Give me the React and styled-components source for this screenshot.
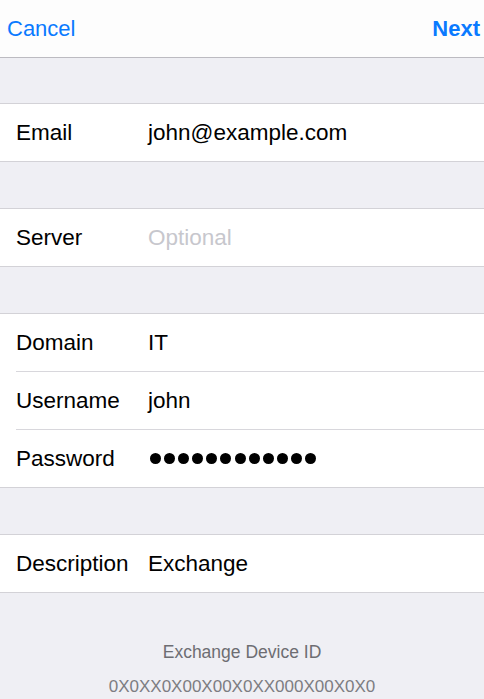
import styled, { createGlobalStyle } from "styled-components";

const GlobalStyle = createGlobalStyle`
  html, body {
    margin: 0;
    padding: 0;
    background: #efeff4;
  }
  body {
    font-family: "Liberation Sans", Arial, sans-serif;
    -webkit-font-smoothing: antialiased;
  }
`;

const groups = [
  [{ label: "Email", value: "john@example.com" }],
  [{ label: "Server", value: "Optional", placeholder: true }],
  [
    { label: "Domain", value: "IT" },
    { label: "Username", value: "john" },
    { label: "Password", secret: 12 },
  ],
  [{ label: "Description", value: "Exchange" }],
];

const App = () => {
  return (
    <Page>
      <GlobalStyle />
      <NavBar>
        <NavButton>Cancel</NavButton>
        <NavButton $bold>Next</NavButton>
      </NavBar>

      <Form>
        {groups.map((rows, i) => (
          <Group key={i}>
            {rows.map((row) => (
              <Row key={row.label}>
                <Label>{row.label}</Label>
                {row.secret ? (
                  <Dots aria-label="password">
                    {Array.from({ length: row.secret }).map((_, j) => (
                      <Dot key={j} />
                    ))}
                  </Dots>
                ) : (
                  <Value $placeholder={row.placeholder}>{row.value}</Value>
                )}
              </Row>
            ))}
          </Group>
        ))}
      </Form>

      <Footer>
        <FooterTitle>Exchange Device ID</FooterTitle>
        <DeviceId>0X0XX0X00X00X0XX000X00X0X0</DeviceId>
      </Footer>
    </Page>
  );
};

export default App;

const Page = styled.div`
  min-height: 100vh;
  background: #efeff4;
`;

const NavBar = styled.div`
  height: 57px;
  background: #fdfdfd;
  border-bottom: 1px solid #bcbbc1;
  display: flex;
  align-items: center;
  justify-content: space-between;
  padding: 0 4px 0 7px;
`;

const NavButton = styled.span`
  font-size: 22px;
  color: #0a7aff;
  font-weight: ${(p) => (p.$bold ? 700 : 400)};
`;

const Form = styled.div`
  display: flex;
  flex-direction: column;
  gap: 46px;
  padding-top: 45px;
`;

const Group = styled.div`
  background: #fff;
  border-top: 1px solid #d3d2d7;
  border-bottom: 1px solid #d3d2d7;
`;

const Row = styled.div`
  height: 57px;
  display: flex;
  align-items: center;
  padding-left: 16px;

  & + & {
    border-top: 1px solid #d8d7dc;
    margin-left: 16px;
    padding-left: 0;
  }
`;

const Label = styled.span`
  width: 132px;
  flex-shrink: 0;
  font-size: 22.5px;
  color: #000;
`;

const Value = styled.span`
  font-size: 22.5px;
  color: ${(p) => (p.$placeholder ? "#c7c7cd" : "#000")};
`;

const Dots = styled.span`
  display: flex;
  gap: 3.1px;
  padding-left: 2px;
`;

const Dot = styled.span`
  width: 11px;
  height: 11px;
  border-radius: 50%;
  background: #000;
`;

const Footer = styled.div`
  padding-top: 49px;
  display: flex;
  flex-direction: column;
  align-items: center;
  gap: 15px;
`;

const FooterTitle = styled.div`
  font-size: 17.5px;
  line-height: 20px;
  color: #6d6d72;
`;

const DeviceId = styled.div`
  font-size: 17px;
  line-height: 20px;
  color: #7d7d82;
`;
